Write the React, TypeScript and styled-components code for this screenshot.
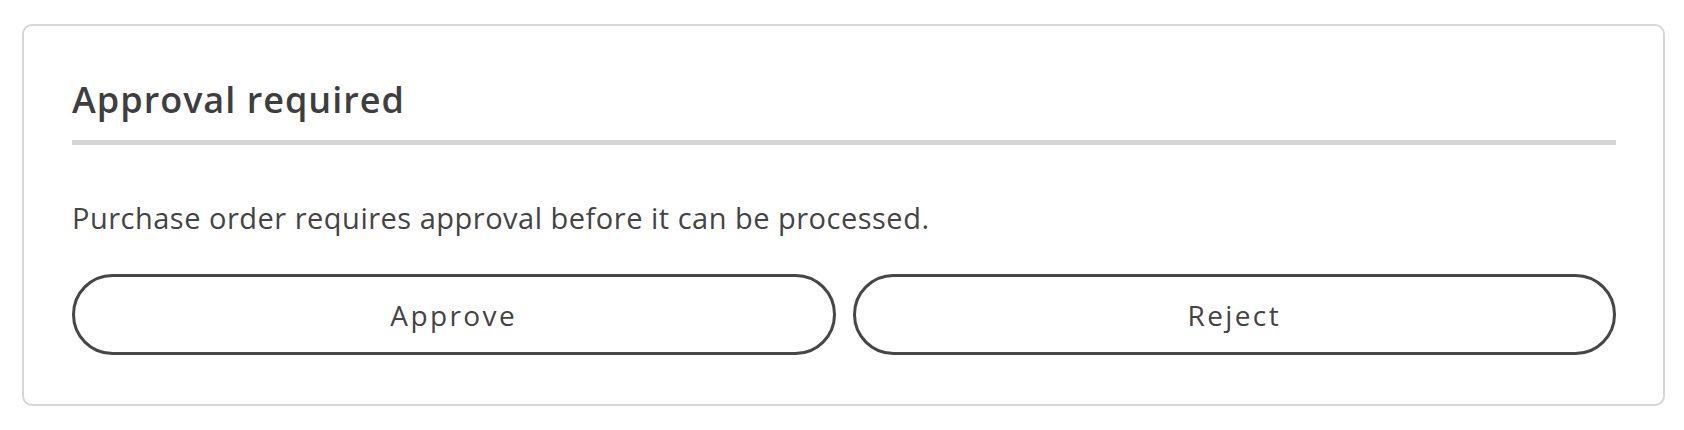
import { createGlobalStyle, styled } from "styled-components";

const GlobalStyle = createGlobalStyle`
  html, body {
    margin: 0;
    padding: 0;
    background: #ffffff;
  }
  body {
    font-family: "Open Sans", "Liberation Sans", sans-serif;
    color: #404040;
  }
`;

const Page = styled.div`
  padding: 24px 19px 24px 22px;
`;

const Card = styled.section`
  border: 2px solid #d6d6d6;
  border-radius: 10px;
  padding: 49px 47px 49px 48px;
  background: #fff;
`;

const Title = styled.h2`
  margin: 0;
  font-size: 36px;
  line-height: 49px;
  font-weight: 600;
  letter-spacing: 1px;
  color: #3e3e3e;
`;

const Divider = styled.hr`
  margin: 16px 0 0;
  border: 0;
  height: 5px;
  background: #d5d5d5;
`;

const Message = styled.p`
  margin: 54px 0 0;
  font-size: 29px;
  line-height: 38px;
  letter-spacing: 0.5px;
  color: #444;
`;

const Actions = styled.div`
  display: grid;
  grid-template-columns: 1fr 1fr;
  gap: 17px;
  margin-top: 37px;
`;

const ActionButton = styled.button`
  height: 81px;
  border: 3px solid #464646;
  border-radius: 41px;
  background: transparent;
  font-family: "Open Sans", "Liberation Sans", sans-serif;
  font-size: 28px;
  letter-spacing: 2.4px;
  color: #444;
  cursor: pointer;
`;

export default function App() {
  const onApprove = () => {};
  const onReject = () => {};

  return (
    <>
      <GlobalStyle />
      <Page>
        <Card>
          <Title>Approval required</Title>
          <Divider />
          <Message>Purchase order requires approval before it can be processed.</Message>
          <Actions>
            <ActionButton onClick={onApprove}>Approve</ActionButton>
            <ActionButton onClick={onReject}>Reject</ActionButton>
          </Actions>
        </Card>
      </Page>
    </>
  );
}
